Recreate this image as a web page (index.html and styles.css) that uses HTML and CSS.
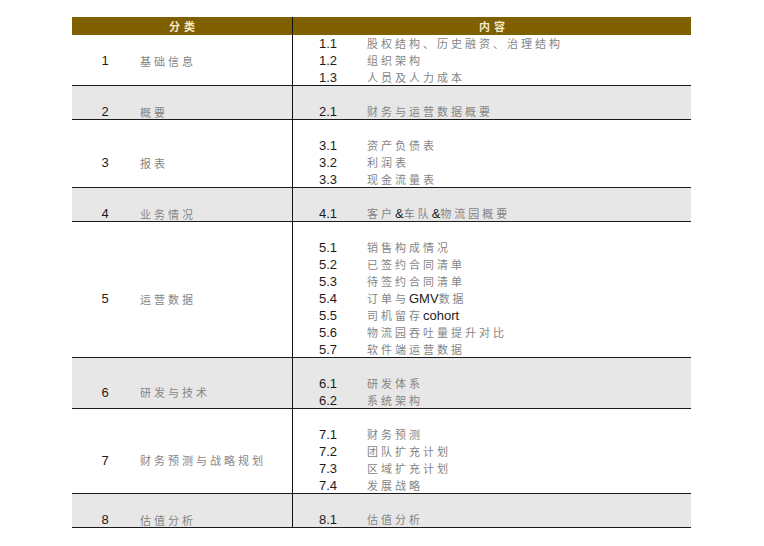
FILE: index.html
```html
<!DOCTYPE html>
<html lang="zh">
<head>
<meta charset="utf-8">
<title>目录</title>
<link rel="stylesheet" href="styles.css">
</head>
<body>
<div class="toc">
  <div class="head">
    <div class="hcell">分类</div>
    <div class="hcell hright">内容</div>
  </div>

  <div class="row">
    <div class="body">
      <div class="cat"><span class="num">1</span><span class="zh">基础信息</span></div>
      <div class="items">
        <div class="item"><span class="inum">1.1</span><span class="zh">股权结构、历史融资、治理结构</span></div>
        <div class="item"><span class="inum">1.2</span><span class="zh">组织架构</span></div>
        <div class="item"><span class="inum">1.3</span><span class="zh">人员及人力成本</span></div>
      </div>
    </div>
  </div>

  <div class="row gray spaced">
    <div class="gap"><div></div><div class="gapr"></div></div>
    <div class="body">
      <div class="cat"><span class="num">2</span><span class="zh">概要</span></div>
      <div class="items">
        <div class="item"><span class="inum">2.1</span><span class="zh">财务与运营数据概要</span></div>
      </div>
    </div>
  </div>

  <div class="row spaced">
    <div class="gap"><div></div><div class="gapr"></div></div>
    <div class="body">
      <div class="cat"><span class="num">3</span><span class="zh">报表</span></div>
      <div class="items">
        <div class="item"><span class="inum">3.1</span><span class="zh">资产负债表</span></div>
        <div class="item"><span class="inum">3.2</span><span class="zh">利润表</span></div>
        <div class="item"><span class="inum">3.3</span><span class="zh">现金流量表</span></div>
      </div>
    </div>
  </div>

  <div class="row gray spaced">
    <div class="gap"><div></div><div class="gapr"></div></div>
    <div class="body">
      <div class="cat"><span class="num">4</span><span class="zh">业务情况</span></div>
      <div class="items">
        <div class="item"><span class="inum">4.1</span><span class="zh">客户<span class="lat">&amp;</span>车队<span class="lat">&amp;</span>物流园概要</span></div>
      </div>
    </div>
  </div>

  <div class="row spaced">
    <div class="gap"><div></div><div class="gapr"></div></div>
    <div class="body">
      <div class="cat"><span class="num">5</span><span class="zh">运营数据</span></div>
      <div class="items">
        <div class="item"><span class="inum">5.1</span><span class="zh">销售构成情况</span></div>
        <div class="item"><span class="inum">5.2</span><span class="zh">已签约合同清单</span></div>
        <div class="item"><span class="inum">5.3</span><span class="zh">待签约合同清单</span></div>
        <div class="item"><span class="inum">5.4</span><span class="zh">订单与<span class="lat">GMV</span>数据</span></div>
        <div class="item"><span class="inum">5.5</span><span class="zh">司机留存<span class="lat">cohort</span></span></div>
        <div class="item"><span class="inum">5.6</span><span class="zh">物流园吞吐量提升对比</span></div>
        <div class="item"><span class="inum">5.7</span><span class="zh">软件端运营数据</span></div>
      </div>
    </div>
  </div>

  <div class="row gray spaced">
    <div class="gap"><div></div><div class="gapr"></div></div>
    <div class="body">
      <div class="cat"><span class="num">6</span><span class="zh">研发与技术</span></div>
      <div class="items">
        <div class="item"><span class="inum">6.1</span><span class="zh">研发体系</span></div>
        <div class="item"><span class="inum">6.2</span><span class="zh">系统架构</span></div>
      </div>
    </div>
  </div>

  <div class="row spaced">
    <div class="gap"><div></div><div class="gapr"></div></div>
    <div class="body">
      <div class="cat"><span class="num">7</span><span class="zh">财务预测与战略规划</span></div>
      <div class="items">
        <div class="item"><span class="inum">7.1</span><span class="zh">财务预测</span></div>
        <div class="item"><span class="inum">7.2</span><span class="zh">团队扩充计划</span></div>
        <div class="item"><span class="inum">7.3</span><span class="zh">区域扩充计划</span></div>
        <div class="item"><span class="inum">7.4</span><span class="zh">发展战略</span></div>
      </div>
    </div>
  </div>

  <div class="row gray spaced">
    <div class="gap"><div></div><div class="gapr"></div></div>
    <div class="body">
      <div class="cat"><span class="num">8</span><span class="zh">估值分析</span></div>
      <div class="items">
        <div class="item"><span class="inum">8.1</span><span class="zh">估值分析</span></div>
      </div>
    </div>
  </div>
</div>
</body>
</html>
```

FILE: styles.css
```css
html, body {
  margin: 0;
  padding: 0;
  background: #ffffff;
}

body {
  font-family: "Liberation Sans", Arial, "Noto Sans CJK SC", sans-serif;
}

.toc {
  margin: 17px 0 0 72px;
  width: 619px;
}

.head {
  display: grid;
  grid-template-columns: 220px 1fr;
  height: 18px;
  background: #7f6000;
}

.hcell {
  font-family: "Noto Sans CJK SC", sans-serif;
  font-weight: 700;
  font-size: 11px;
  line-height: 18px;
  letter-spacing: 4px;
  color: #f4e9c6;
  text-align: center;
  padding-left: 4px;
}

.hright {
  border-left: 1px solid #111111;
}

.row {
  border-bottom: 1px solid #1a1a1a;
  background: #ffffff;
}

.row.gray {
  background: #e7e7e7;
}

.gap {
  display: grid;
  grid-template-columns: 220px 1fr;
  height: 17px;
}

.gapr {
  border-left: 1px solid #111111;
}

.body {
  display: grid;
  grid-template-columns: 220px 1fr;
  margin-bottom: -1px;
}

.cat {
  display: flex;
  align-items: center;
}

.num {
  width: 66px;
  text-align: center;
  font-size: 13px;
  color: #1c1c1c;
  line-height: 17px;
}

.items {
  border-left: 1px solid #111111;
  padding-left: 26px;
}

.item {
  display: flex;
  height: 17px;
  line-height: 17px;
}

.inum {
  width: 48px;
  font-size: 13px;
  color: #1c1c1c;
}

.zh {
  font-family: "Noto Sans CJK SC", sans-serif;
  font-size: 11px;
  letter-spacing: 3px;
  color: #858585;
  white-space: nowrap;
}

.cat .zh {
  margin-left: 2px;
}

.lat {
  font-family: "Liberation Sans", Arial, sans-serif;
  font-size: 13px;
  letter-spacing: 0;
  color: #1c1c1c;
}
```
